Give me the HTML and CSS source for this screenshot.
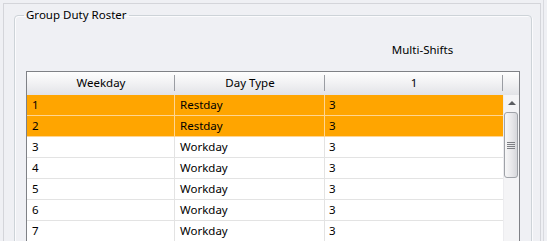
FILE: index.html
```html
<!DOCTYPE html>
<html>
  <head>
    <meta charset="utf-8" />
    <title>Group Duty Roster</title>
    <link rel="stylesheet" href="styles.css">
  </head>

  <body>
    <div class="window">
      <div class="frame">
        <fieldset class="group">
          <legend>Group Duty Roster</legend>

          <div class="caption">Multi-Shifts</div>

          <div class="grid">
            <div class="grid_head">
              <div class="hcell div">Weekday</div>
              <div class="hcell div">Day Type</div>
              <div class="hcell div">1</div>
              <div class="hcell"></div>
            </div>

            <div class="grid_body">
              <div class="rows">
                <div class="row sel"><div class="cell">1</div><div class="cell">Restday</div><div class="cell">3</div></div>
                <div class="row sel"><div class="cell">2</div><div class="cell">Restday</div><div class="cell">3</div></div>
                <div class="row"><div class="cell">3</div><div class="cell">Workday</div><div class="cell">3</div></div>
                <div class="row"><div class="cell">4</div><div class="cell">Workday</div><div class="cell">3</div></div>
                <div class="row"><div class="cell">5</div><div class="cell">Workday</div><div class="cell">3</div></div>
                <div class="row"><div class="cell">6</div><div class="cell">Workday</div><div class="cell">3</div></div>
                <div class="row"><div class="cell">7</div><div class="cell">Workday</div><div class="cell">3</div></div>
              </div>

              <!-- vertical scrollbar -->
              <div class="vscroll">
                <div class="sb_btn"><span class="arrow_up"></span></div>
                <div class="sb_thumb">
                  <span class="grip"></span>
                </div>
              </div>
            </div>
          </div>
        </fieldset>
      </div>
    </div>
  </body>
</html>
```

FILE: styles.css
```css
html,
body {
  margin: 0;
  padding: 0;
  background: #eff0f4;
  overflow: hidden;
}
body,
body * {
  font-family: "Noto Sans", "Segoe UI", sans-serif;
  font-size: 11.5px;
  color: #000;
  box-sizing: border-box;
}
.window {
  width: 544px;
  height: 241px;
  border-right: 1px solid #d9dadf;
  overflow: hidden;
}
.frame {
  width: 538px;
  height: 260px;
  margin: 3px 0 0 3px;
  padding: 3px 8px 0 10px;
  border: 1px solid #d4d5da;
  border-bottom: 0;
}
.group {
  margin: 0;
  padding: 0 11px;
  min-width: 0;
  height: 280px;
  border: 1px solid #cdd3d8;
  border-radius: 4px;
  box-shadow: inset 1px 1px 0 #fbfbfd, 1px 1px 0 #fbfbfd;
}
.group legend {
  margin-left: -2px;
  padding: 0 2px;
  line-height: 16px;
  height: 16px;
}
.caption {
  height: 48px;
  padding: 19px 0 0 299px;
  line-height: 16px;
  text-align: center;
}
.grid {
  width: 494px;
  border: 1px solid #7f8186;
  border-bottom: 0;
  background: #fff;
}
.grid_head {
  display: grid;
  grid-template-columns: 148px 150px 178px 16px;
  height: 23px;
  background: linear-gradient(#fefefe, #f1f1f3 50%, #e2e3e7);
}
.hcell {
  position: relative;
  line-height: 22px;
  text-align: center;
}
.hcell.div::after {
  content: "";
  position: absolute;
  right: 0;
  top: 3px;
  bottom: 4px;
  width: 1px;
  background: #9a9ca2;
}
.grid_body {
  display: flex;
}
.rows {
  width: 476px;
}
.row {
  display: grid;
  grid-template-columns: 148px 150px 178px;
  height: 21px;
  border-bottom: 1px solid #e3e3e3;
}
.cell {
  padding-left: 5px;
  line-height: 20px;
  border-right: 1px solid #e3e3e3;
}
.cell:last-child {
  padding-left: 4px;
  border-right: 0;
}
.row.sel {
  background: #ffa500;
  border-bottom-color: #ffd591;
}
.row.sel .cell {
  border-right-color: #ffd591;
}
.vscroll {
  width: 16px;
  height: 160px;
  background: #f4f4f6;
  border-left: 1px solid #ececef;
}
.sb_btn {
  height: 17px;
  display: flex;
  justify-content: center;
  padding-top: 6px;
}
.arrow_up {
  width: 0;
  height: 0;
  border-left: 4px solid transparent;
  border-right: 4px solid transparent;
  border-bottom: 4px solid #5b5d61;
}
.sb_thumb {
  width: 14px;
  height: 66px;
  margin-left: 0;
  border: 1px solid #9fa2a8;
  border-radius: 3px;
  background: linear-gradient(to right, #f7f7f8, #e6e6e9 60%, #d6d7db);
  display: flex;
  align-items: center;
  justify-content: center;
}
.grip {
  width: 8px;
  height: 7px;
  background: repeating-linear-gradient(#7d7f84 0 1px, transparent 1px 2px);
}
```
